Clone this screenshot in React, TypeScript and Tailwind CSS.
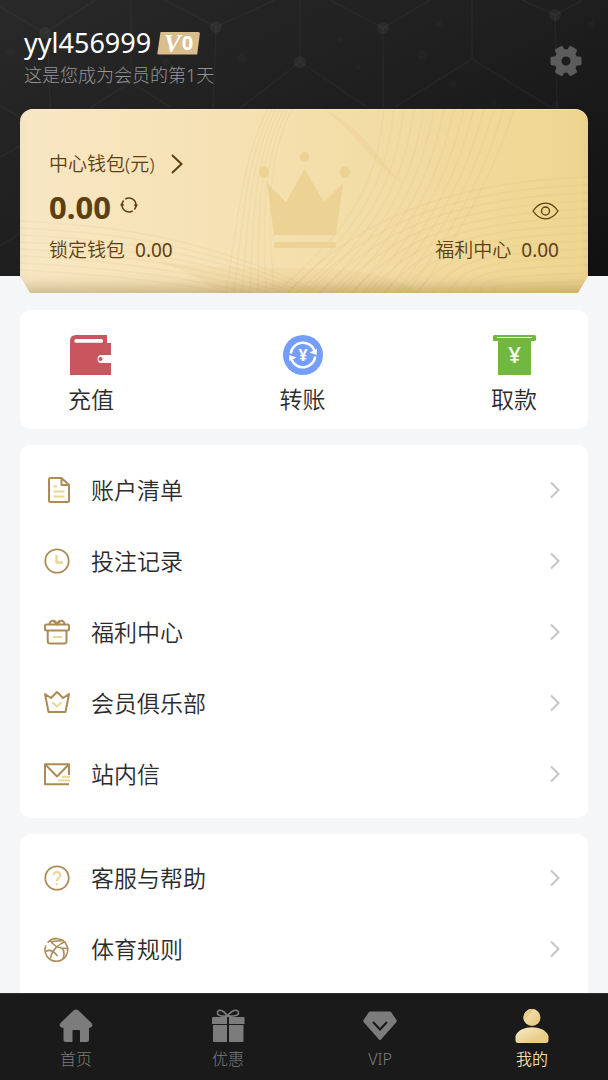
import type { ReactNode } from "react";

const GOLD = "#ab8c57";
const PALE = "#eed594";

function NetworkPattern() {
  const nodes = [
    [45, 33, 6], [216, 27, 6], [300, 62, 6], [383, 28, 6], [555, 15, 6], [556, 107, 5], [10, 52, 4], [241, 59, 5],
    [422, 55, 5], [453, 84, 4], [439, 24, 3], [340, 40, 3], [358, 67, 3], [591, 25, 4], [494, 102, 3], [166, 62, 4],
  ];
  return (
    <svg
      className="pointer-events-none absolute inset-0 h-full w-full"
      viewBox="0 0 608 276"
      preserveAspectRatio="xMidYMid slice"
      aria-hidden="true"
    >
      <g stroke="#fff" strokeOpacity="0.035" strokeWidth="1.500" fill="none">
        <path d="M0 7 45 33 95 0M131 0V82M131 82 90 108M131 82 170 107M48 38 50 108M165 0 216 27 275 0M216 27 213 108M300 62 240 108M300 62V0M300 62 367 107M330 0 383 28 430 0M383 28V108M472 0V59L395 107M472 59 550 107M522 0 555 15 583 0M555 15 557 108M0 106 20 117M0 157 20 146M0 246 20 233" />
      </g>
      <g fill="#fff">
        {nodes.map(([x, y, r]) => (
          <circle key={`${x}-${y}`} cx={x} cy={y} r={r} fillOpacity={r > 5 ? 0.05 : 0.02} />
        ))}
      </g>
    </svg>
  );
}

function CardPattern() {
  const steps = Array.from({ length: 14 }, (_, i) => i);
  return (
    <svg
      className="pointer-events-none absolute inset-0 h-full w-full"
      viewBox="0 0 568 184"
      preserveAspectRatio="xMidYMid slice"
      aria-hidden="true"
    >
      <g fill="none" stroke="#b98a35" strokeOpacity="0.06" strokeWidth="1.500">
        {steps.map((i) => (
          <path key={`a${i}`} d={`M${364 + i * 10} 0C${358 + i * 9} 60 ${345 + i * 8} 110 ${255 + i * 11} 184`} />
        ))}
        {steps.map((i) => (
          <path key={`b${i}`} d={`M${268 + i * 16} 184C${345 + i * 10} ${100 + i * 6} 450 ${72 + i * 8} 568 ${68 + i * 8}`} />
        ))}
        {steps.slice(0, 7).map((i) => (
          <path key={`c${i}`} d={`M${248 + i * 4} 0C${222 + i * 4} 50 ${218 + i * 5} 110 ${206 + i * 8} 184`} />
        ))}
        {steps.slice(0, 8).map((i) => (
          <path key={`d${i}`} d={`M0 ${112 + i * 7}C80 ${116 + i * 7} 180 ${124 + i * 7} 300 ${184 + i * 3}`} />
        ))}
      </g>
      <path d="M130 150C230 172 330 140 400 184H200C180 170 160 158 130 150Z" fill="#c89b48" fillOpacity="0.06" />
      <path d="M304 0C345 20 352 45 384 75C352 55 340 28 304 0Z" fill="#c89b48" fillOpacity="0.08" />
      <g fill="#ecd295">
        <circle cx="284.500" cy="48" r="5" />
        <ellipse cx="244" cy="63" rx="5" ry="6" />
        <ellipse cx="325" cy="63" rx="5" ry="6" />
        <path d="M247 74 266 93 284.500 60 304 93 323 74 316 126H254Z" />
        <rect x="254" y="133" width="62" height="6" rx="2" />
      </g>
    </svg>
  );
}

function Gear() {
  return (
    <svg width="32" height="32" viewBox="0 0 32 32" aria-hidden="true">
      <g fill="#5c5c5c">
        {[0, 60, 120, 180, 240, 300].map((a) => (
          <rect key={a} x="23" y="11.500" width="8.500" height="9" rx="1.800" transform={`rotate(${a} 16 16)`} />
        ))}
        <path fillRule="evenodd" d="M16 4.300a11.700 11.700 0 1 0 0 23.400a11.700 11.700 0 1 0 0-23.400ZM16 11.500a4.500 4.500 0 1 1 0 9a4.500 4.500 0 1 1 0-9Z" />
      </g>
    </svg>
  );
}

function Refresh() {
  return (
    <svg width="18" height="18" viewBox="0 0 18 18" aria-hidden="true">
      <g fill="none" stroke="#5d3f12" strokeWidth="1.500">
        <path d="M5.200 3.200A7 7 0 0 1 16 9M12.800 14.800A7 7 0 0 1 2 9" />
        <path d="M2 9A7 7 0 0 1 3.600 4.500M16 9A7 7 0 0 1 14.400 13.500" />
      </g>
      <path d="M0 9.500H4.400L2 6.300ZM13.600 8.500H18L16 11.700Z" fill="#5d3f12" />
    </svg>
  );
}

function Eye() {
  return (
    <svg width="27" height="18" viewBox="0 0 27 18" fill="none" stroke="#5d3f12" strokeWidth="1.300" aria-hidden="true">
      <path d="M1 9C8-1.500 19-1.500 26 9C19 19.500 8 19.500 1 9Z" />
      <circle cx="13.500" cy="9" r="4" />
    </svg>
  );
}

function DepositIcon() {
  return (
    <svg width="44" height="40" viewBox="0 0 44 40" aria-hidden="true">
      <path d="M7 0H38V8H42V20H32.500a4 4 0 0 0 0 8H42V40H1V6Q1 0 7 0Z" fill="#c9555f" />
      <rect x="5.500" y="4" width="28.500" height="3.800" rx="1.500" fill="#fff" />
      <circle cx="31.500" cy="24" r="2" fill="#c9555f" />
    </svg>
  );
}

function TransferIcon() {
  return (
    <svg width="44" height="40" viewBox="0 0 44 40" aria-hidden="true">
      <circle cx="22" cy="20" r="20" fill="#749efa" />
      <g fill="none" stroke="#fff" strokeWidth="2.600">
        <path d="M9.700 18.500A12.400 12.400 0 0 1 33.500 15.500" />
        <path d="M34.300 21.500A12.400 12.400 0 0 1 10.500 24.500" />
      </g>
      <path d="M28.500 17.500 35.800 20V14ZM15.500 22.500 8.200 20V26Z" fill="#fff" />
      <text x="22" y="26" textAnchor="middle" fontSize="16" fontWeight="700" fontFamily="Noto Sans, sans-serif" fill="#fff">
        ¥
      </text>
    </svg>
  );
}

function WithdrawIcon() {
  return (
    <svg width="44" height="40" viewBox="0 0 44 40" aria-hidden="true">
      <rect x="1" y="0" width="43" height="6" rx="1.500" fill="#70b842" />
      <rect x="6" y="4" width="33" height="36" fill="#70b842" />
      <rect x="5" y="2" width="35" height="1" fill="#fff" />
      <text x="22.500" y="28" textAnchor="middle" fontSize="22" fontWeight="500" fontFamily="Noto Sans, sans-serif" fill="#fff">
        ¥
      </text>
    </svg>
  );
}

function LineIcon({ children }: { children: ReactNode }) {
  return (
    <svg
      className="shrink-0"
      width="26"
      height="26"
      viewBox="0 0 26 26"
      fill="none"
      stroke={GOLD}
      strokeWidth="2"
      strokeLinejoin="round"
      aria-hidden="true"
    >
      {children}
    </svg>
  );
}

const icons = {
  doc: (
    <LineIcon>
      <path d="M6.500 1H17.500L25 8V23.500Q25 25 23.500 25H6.500Q5 25 5 23.500V2.500Q5 1 6.500 1ZM17.500 1V8H25" />
      <path d="M9.500 9.500H13M9.500 14.500H20.500M9.500 19.500H20.500" stroke={PALE} />
    </LineIcon>
  ),
  clock: (
    <LineIcon>
      <circle cx="13" cy="13" r="11.700" strokeWidth="1.800" />
      <path d="M12.500 7V14.500H19" stroke={PALE} strokeWidth="2.400" />
    </LineIcon>
  ),
  gift: (
    <LineIcon>
      <rect x="1" y="5.500" width="24" height="6" rx="1.500" />
      <path d="M3.700 11.500V22Q3.700 24.500 6.200 24.500H20Q22.500 24.500 22.500 22V11.500" />
      <path d="M5.500 5.500C6 .5 11.500 .5 13 5.500C14.500 .5 20 .5 20.500 5.500M10 2.500 13 5.500 16 2.500" />
      <path d="M9 18H18" stroke={PALE} />
    </LineIcon>
  ),
  crown: (
    <LineIcon>
      <path d="M1 4 4.500 22H21.500L25 4 19 8 13 2 7 8Z" />
      <path d="M8.500 12.500 13 16.500 17.500 12.500" stroke={PALE} />
    </LineIcon>
  ),
  mail: (
    <LineIcon>
      <path d="M25 14V3.200H1V23.200H25M1 3.200 13 15.500 25 3.200" />
      <path d="M18 15.700H26M14 19.500H26" stroke={PALE} />
    </LineIcon>
  ),
  help: (
    <LineIcon>
      <circle cx="13" cy="13" r="11.700" strokeWidth="1.800" />
      <path d="M9.700 10.300C9.700 5.800 16.300 5.800 16.300 10.300C16.300 12.500 13 12.500 13 16M13 18.200V20.300" stroke={PALE} />
    </LineIcon>
  ),
  ball: (
    <LineIcon>
      <g strokeWidth="1.600">
        <path d="M3.600 6.700A11.300 11.300 0 1 1 1.900 9.500" />
        <path d="M6 4C9 10 14 13 24.500 12.500M21.500 5.500C14 8 7.500 15 6.500 22.500M2 15.500C5.500 13 9.500 15 13.500 20M8 6C12 4 16 6 19.500 4M18.500 12.500C20.500 16 20.500 19 19 22.500" />
      </g>
    </LineIcon>
  ),
};

function Chevron() {
  return (
    <svg className="ml-auto shrink-0" width="10" height="18" viewBox="0 0 10 18" fill="none" stroke="#c5c5c8" strokeWidth="2" aria-hidden="true">
      <path d="M1 1.500 8.500 9 1 16.500" />
    </svg>
  );
}

function MenuRow({ icon, label }: { icon: keyof typeof icons; label: string }) {
  return (
    <li>
      <a href="#" className="flex h-[71px] items-center gap-[21px] pr-7 pl-6 text-[23px] leading-8 font-[350]">
        {icons[icon]}
        <span>{label}</span>
        <Chevron />
      </a>
    </li>
  );
}

function Action({ icon, label }: { icon: ReactNode; label: string }) {
  return (
    <button type="button" className="flex flex-col items-center gap-2 text-[23px] leading-8 font-[350]">
      {icon}
      <span>{label}</span>
    </button>
  );
}

function Tab({ icon, label, active = false }: { icon: ReactNode; label: string; active?: boolean }) {
  return (
    <a
      href="#"
      aria-current={active ? "page" : undefined}
      className={`flex flex-col items-center gap-1 text-[16px] leading-6 ${active ? "font-[350] text-[#f3dfae]" : "text-[#7c7c7c]"}`}
    >
      <svg width="34" height="34" viewBox="0 0 34 34" fill="currentColor" aria-hidden="true">
        {icon}
      </svg>
      <span>{label}</span>
    </a>
  );
}

export default function App() {
  return (
    <div className="flex h-screen flex-col bg-[#f5f6f8] font-['Noto_Sans','Noto_Sans_CJK_SC',sans-serif] font-light text-[#2b2b2b]">
      <main className="flex min-h-0 flex-1 flex-col overflow-y-auto [scrollbar-width:none]">
        <header className="relative flex shrink-0 flex-col bg-linear-to-br from-[#292929] via-[#1e1e1e] to-[#101010] pt-[25px]">
          <NetworkPattern />
          <div className="relative flex items-center justify-between pr-[26px] pl-6">
            <div>
              <div className="flex items-center gap-1.5">
                <h1 className="text-[27px] leading-9 font-normal text-white">yyl456999</h1>
                <span className="flex h-[23px] w-[43px] items-center justify-center gap-px rounded-xs bg-[#dabd8c] leading-none font-bold text-white [clip-path:polygon(8%_0,100%_0,93%_100%,0_100%)]">
                  <span className="font-['Liberation_Serif',serif] text-[25px] italic">V</span>
                  <span className="text-[20px]">0</span>
                </span>
              </div>
              <p className="text-[18px] leading-7 text-[#959595]">这是您成为会员的第1天</p>
            </div>
            <button type="button" aria-label="设置" className="mt-2">
              <Gear />
            </button>
          </div>

          <section className="relative mx-5 mt-5 -mb-[17px] flex flex-col gap-[7px] rounded-t-[13px] bg-linear-to-r from-[#f8e7c4] via-[#f4dfac] to-[#eed58f] px-[29px] pt-[41px] pb-[29px] text-[19px] leading-7 text-[#5d3f12] [clip-path:polygon(0_0,100%_0,100%_calc(100%-17px),calc(100%-10px)_100%,10px_100%,0_calc(100%-17px))]">
            <CardPattern />
            <div className="pointer-events-none absolute inset-0 rounded-t-[13px] shadow-[inset_0_1px_1px_rgba(255,248,225,0.5),inset_0_-14px_14px_-8px_rgba(120,90,35,0.35)]" />
            <a href="#" className="relative flex items-center gap-4 self-start font-[350]">
              <span>中心钱包(元)</span>
              <svg width="12" height="20" viewBox="0 0 12 20" fill="none" stroke="currentColor" strokeWidth="2" aria-hidden="true">
                <path d="M1 1 10.500 10 1 19" />
              </svg>
            </a>
            <div className="relative flex h-11 items-center gap-[9px]">
              <strong className="text-[31px] leading-[44px] font-bold">0.00</strong>
              <button type="button" aria-label="刷新" className="pb-1">
                <Refresh />
              </button>
              <button type="button" aria-label="显示余额" className="ml-auto pt-2">
                <Eye />
              </button>
            </div>
            <div className="relative flex justify-between font-[350]">
              <p className="flex gap-2.5">
                <span>锁定钱包</span>
                <span className="font-normal">0.00</span>
              </p>
              <p className="flex gap-2.5">
                <span>福利中心</span>
                <span className="font-normal">0.00</span>
              </p>
            </div>
          </section>
        </header>

        <section className="mx-5 mt-[34px] flex shrink-0 justify-between rounded-[10px] bg-white pt-[25px] pr-[51px] pb-[14px] pl-12">
          <Action icon={<DepositIcon />} label="充值" />
          <Action icon={<TransferIcon />} label="转账" />
          <Action icon={<WithdrawIcon />} label="取款" />
        </section>

        <ul className="mx-5 mt-4 shrink-0 rounded-[10px] bg-white py-[9px]">
          <MenuRow icon="doc" label="账户清单" />
          <MenuRow icon="clock" label="投注记录" />
          <MenuRow icon="gift" label="福利中心" />
          <MenuRow icon="crown" label="会员俱乐部" />
          <MenuRow icon="mail" label="站内信" />
        </ul>

        <ul className="mx-5 mt-4 shrink-0 grow rounded-t-[10px] bg-white pt-2">
          <MenuRow icon="help" label="客服与帮助" />
          <MenuRow icon="ball" label="体育规则" />
        </ul>
      </main>

      <nav className="grid shrink-0 grid-cols-4 border-t border-[#303030] bg-[#1a1a1a] pt-[15px] pb-[9px]">
        <Tab
          label="首页"
          icon={<path d="M14.500 1.500Q17-.5 19.500 1.500L32.500 14Q35 18 31 18.700H30V30.500Q30 33 27.500 33H21V22Q21 21 20 21H14.500Q13.500 21 13.500 22V33H7Q4.500 33 4.500 30.500V18.700H3Q-1 18 1.500 14Z" />}
        />
        <Tab
          label="优惠"
          icon={
            <>
              <path d="M16.500 7C12 0 6 0 6.500 4C6.500 7 11 7.500 16.500 7C22 7.500 27.500 7 27.500 4C28 0 21 0 16.500 7Z" fill="none" stroke="currentColor" strokeWidth="1.600" />
              <path d="M2 8H16V15H1V9Q1 8 2 8ZM18 8H32.500Q33.500 8 33.500 9V15H18ZM2 16H16V33H3Q2 33 2 32ZM18 16H32.500V32Q32.500 33 31.500 33H18Z" />
            </>
          }
        />
        <Tab
          label="VIP"
          icon={
            <>
              <path d="M7.500 2.500H26.500Q27.500 2.500 28 3L33.500 11Q34 12 33.500 13L18 30.500Q17 31.500 16 30.500L.5 13Q0 12 .5 11L6 3Q6.500 2.500 7.500 2.500Z" />
              <path d="M10 13 17 20.500 24 13" fill="none" stroke="#1a1a1a" strokeWidth="2" />
            </>
          }
        />
        <Tab
          active
          label="我的"
          icon={
            <>
              <defs>
                <linearGradient id="profileGold" x1="0" y1="0" x2="1" y2="1">
                  <stop offset="0.15" stopColor="#f6e7be" />
                  <stop offset="0.7" stopColor="#e8cc88" />
                </linearGradient>
              </defs>
              <circle cx="17" cy="8.500" r="8.500" fill="url(#profileGold)" />
              <path d="M8.900 11.200A8.500 8.500 0 0 1 19.800 .5Z" fill="#e8cc88" />
              <path d="M3 34Q.5 34 .5 31V27C3 21 10 18.300 17 18.300S31 21 33.500 27V31Q33.500 34 31 34Z" fill="url(#profileGold)" />
            </>
          }
        />
      </nav>
    </div>
  );
}
